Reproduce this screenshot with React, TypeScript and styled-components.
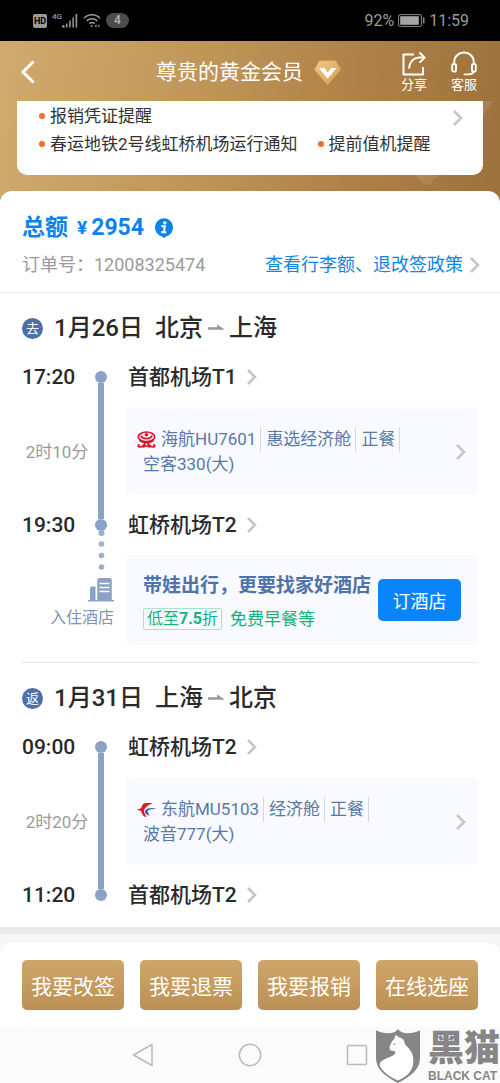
import React from "react";
import styled, { createGlobalStyle } from "styled-components";

const GlobalStyle = createGlobalStyle`
  *, *::before, *::after { box-sizing: border-box; }
  body {
    margin: 0;
    background: #fff;
    color: #2a2a2a;
    font-family: Roboto, "Noto Sans CJK SC", sans-serif;
  }
  h1, h2, h3, p, ul { margin: 0; padding: 0; }
  ul { list-style: none; }
  button { font: inherit; border: 0; padding: 0; background: none; cursor: pointer; }
  a { color: inherit; text-decoration: none; }
  svg { display: block; flex: none; }
`;

const Page = styled.div`
  position: relative;
  width: 100%;
  overflow: hidden;
`;

/* ---------- status bar ---------- */

const StatusBar = styled.div`
  display: flex;
  align-items: center;
  justify-content: space-between;
  height: 41px;
  padding: 0 31px 0 33px;
  background: #000;
  color: #9a9a9a;
  font-size: 16px;
  line-height: 20px;
`;

const StatusGroup = styled.div<{ $gap: number }>`
  display: flex;
  align-items: center;
  gap: ${(p) => p.$gap}px;
`;

const HdBadge = styled.span`
  width: 14px;
  border-radius: 2px;
  background: #9a9a9a;
  color: #000;
  font-size: 9px;
  font-weight: 700;
  line-height: 14px;
  text-align: center;
`;

const Signal = styled.span`
  display: flex;
  align-items: flex-start;
  font-size: 8px;
  font-weight: 500;
  line-height: 8px;
`;

const CountPill = styled.span`
  width: 23px;
  border-radius: 8px;
  background: #4c4c4c;
  color: #b5b5b5;
  font-size: 12px;
  font-weight: 500;
  line-height: 15px;
  text-align: center;
`;

/* ---------- gold header ---------- */

const Hero = styled.div`
  position: relative;
  padding-bottom: 28px;
  background: linear-gradient(97deg, #d0aa6e 0%, #c19759 38%, #ad8047 72%, #9d713c 100%);
`;

const HeroDecor = styled.svg`
  position: absolute;
  right: 0;
  bottom: 0;
`;

const Header = styled.header`
  display: flex;
  align-items: center;
  justify-content: space-between;
  height: 60px;
  padding: 2px 23px 0 20px;
  color: #fff;
`;

const BackButton = styled.button`
  flex: 1;
  color: inherit;
`;

const MemberTitle = styled.h1`
  display: flex;
  align-items: center;
  gap: 11px;
  font-size: 21px;
  font-weight: 400;
  line-height: 30px;
`;

const HeaderActions = styled.div`
  display: flex;
  flex: 1;
  justify-content: flex-end;
  gap: 24px;
`;

const HeaderAction = styled.button`
  display: flex;
  flex-direction: column;
  align-items: center;
  color: inherit;
  font-size: 13px;
  line-height: 18px;
`;

const NoticeCard = styled.section`
  position: relative;
  display: flex;
  align-items: flex-start;
  justify-content: space-between;
  margin: 0 17px;
  padding: 1px 20px 17px 22px;
  border-radius: 0 0 10px 10px;
  background: #fff;
`;

const NoticeList = styled.ul`
  display: flex;
  flex-wrap: wrap;
  column-gap: 20px;
`;

const Notice = styled.li<{ $fullRow?: boolean }>`
  display: flex;
  align-items: center;
  gap: 5px;
  width: ${(p) => (p.$fullRow ? "100%" : "auto")};
  color: #333;
  font-size: 17px;
  line-height: 28px;
  white-space: nowrap;

  &::before {
    content: "";
    width: 6px;
    height: 6px;
    border-radius: 50%;
    background: #fb6d21;
  }
`;

const NoticeMore = styled.button`
  height: 32px;
`;

/* ---------- order sheet ---------- */

const Sheet = styled.main`
  position: relative;
  margin-top: -12px;
  border-radius: 12px 12px 0 0;
  background: #fff;
`;

const Summary = styled.section`
  padding: 21px 20px 14px 22px;
  border-bottom: 1px solid #e6e6e6;
`;

const Total = styled.h2`
  display: flex;
  align-items: center;
  color: #0a83ee;
  font-size: 23px;
  font-weight: 700;
  line-height: 32px;
`;

const Currency = styled.span`
  margin: 0 4px 0 9px;
  font-size: 19px;
`;

const Amount = styled.span`
  margin-right: 10px;
`;

const OrderRow = styled.div`
  display: flex;
  align-items: center;
  justify-content: space-between;
  margin-top: 8px;
  color: #9b9b9b;
  font-size: 18px;
  line-height: 26px;
  white-space: nowrap;
`;

const PolicyLink = styled.a`
  display: flex;
  align-items: center;
  gap: 7px;
  color: #1285e2;
`;

const Trip = styled.section`
  padding: 0 22px;
`;

const TripBody = styled.div<{ $divided?: boolean }>`
  padding: 18px 0 17px;
  border-bottom: ${(p) => (p.$divided ? "1px solid #e6e6e6" : "0")};
`;

const TripTitle = styled.h2`
  display: flex;
  align-items: center;
  margin-bottom: 17px;
  font-size: 24px;
  font-weight: 500;
  line-height: 34px;
`;

const TripBadge = styled.span`
  width: 21px;
  margin-right: 11px;
  border-radius: 50%;
  background: #4c71a9;
  color: #fff;
  font-size: 13px;
  font-weight: 400;
  line-height: 21px;
  text-align: center;
`;

const TripRoute = styled.span`
  display: flex;
  align-items: center;
  gap: 5px;
  margin-left: 12px;
`;

const Timeline = styled.div`
  display: grid;
  grid-template-columns: 70px 34px 1fr;
  grid-template-rows: 30px auto 30px;
  row-gap: 15px;
`;

const Time = styled.time<{ $row: number }>`
  grid-area: ${(p) => p.$row} / 1;
  font-size: 21px;
  font-weight: 500;
  line-height: 30px;
`;

const Duration = styled.span`
  grid-area: 2 / 1;
  align-self: center;
  padding-top: 2px;
  color: #9b9b9b;
  font-size: 17px;
  line-height: 26px;
  text-align: center;
  white-space: nowrap;
`;

const Rail = styled.span`
  grid-area: 1 / 2 / 4 / 3;
  display: flex;
  flex-direction: column;
  align-items: center;
  width: 18px;
  padding: 9px 0;
`;

const RailStop = styled.span`
  width: 12px;
  height: 12px;
  border-radius: 50%;
  background: #8ba2c6;
`;

const RailLine = styled.span`
  flex: 1;
  width: 6px;
  background: #8ba2c6;
`;

const Station = styled.a<{ $row: number }>`
  grid-area: ${(p) => p.$row} / 3;
  display: flex;
  align-items: center;
  gap: 10px;
  padding-left: 2px;
  font-size: 21px;
  font-weight: 500;
  line-height: 30px;
`;

const FlightCard = styled.a`
  grid-area: 2 / 3;
  display: flex;
  align-items: center;
  justify-content: space-between;
  padding: 20px 12px 18px 11px;
  border-radius: 5px;
  background: #f8faff;
  color: #5878a6;
  font-size: 17px;
  line-height: 25px;
`;

const FlightFacts = styled.div`
  display: flex;
  align-items: center;
  white-space: nowrap;
`;

const Fact = styled.span`
  padding: 0 4px 0 5px;
  border-right: 1px solid #d3d9e4;
`;

const Aircraft = styled.p`
  padding-left: 6px;
`;

const HotelSide = styled.div`
  grid-area: 3 / 1 / 5 / 3;
  display: flex;
  flex-direction: column;
  align-items: flex-end;
  justify-content: flex-end;
  padding: 0 12px 14px 0;
  color: #7d93b8;
  font-size: 16px;
  line-height: 26px;
`;

const HotelCard = styled.div`
  grid-area: 4 / 3;
  display: flex;
  align-items: center;
  justify-content: space-between;
  padding: 15px 17px;
  border-radius: 5px;
  background: #f8faff;
`;

const HotelTitle = styled.h3`
  color: #4f72a8;
  font-size: 19px;
  font-weight: 700;
  line-height: 32px;
  white-space: nowrap;
`;

const HotelPerks = styled.p`
  display: flex;
  align-items: center;
  gap: 8px;
  margin-top: 6px;
  color: #12b37a;
  font-size: 17px;
  line-height: 22px;
`;

const DiscountTag = styled.span`
  padding: 0 3px;
  border: 1px solid #a9e3cc;
  border-radius: 2px;
  font-size: 16px;
  line-height: 20px;
  white-space: nowrap;
`;

const BookButton = styled.button`
  flex: none;
  width: 83px;
  height: 42px;
  border-radius: 5px;
  background: #0a84fb;
  color: #fff;
  font-size: 18px;
`;

/* ---------- bottom actions ---------- */

const ActionArea = styled.div`
  padding-top: 9px;
  border-top: 7px solid #ebebeb;
  background: #f6f6f6;
`;

const ActionBar = styled.footer`
  display: grid;
  grid-template-columns: repeat(4, 1fr);
  gap: 16px;
  padding: 17px 22px 16px;
  border-radius: 12px 12px 0 0;
  background: #fff;
`;

const GoldButton = styled.button`
  height: 50px;
  border-radius: 5px;
  background: linear-gradient(180deg, #cfa669 0%, #bb9055 100%);
  color: #fff;
  font-size: 21px;
  white-space: nowrap;
`;

const SystemNav = styled.nav`
  display: flex;
  align-items: center;
  justify-content: center;
  gap: 84px;
  height: 57px;
  background: #fbfbfb;
`;

const Watermark = styled.div`
  position: absolute;
  right: 0;
  bottom: 0;
  display: flex;
  align-items: center;
  gap: 7px;
  height: 55px;
  color: #868686;
`;

const WatermarkName = styled.div`
  width: 72px;
  font-size: 36px;
  font-weight: 900;
  line-height: 40px;
`;

const WatermarkLatin = styled.div`
  font-family: "Liberation Sans", sans-serif;
  font-size: 12px;
  font-weight: 700;
  line-height: 14px;
  white-space: nowrap;
`;

/* ---------- icons ---------- */

const Chevron = () => (
  <svg width="10" height="16" viewBox="0 0 10 16" fill="none" stroke="#c6c6c6" strokeWidth="2.6">
    <path d="M1 1l7 7-7 7" />
  </svg>
);

const RouteArrow = () => (
  <svg width="16" height="8" viewBox="0 0 16 8" fill="#999">
    <path d="M0 3.200h9V.6L16 5v.8H0z" />
  </svg>
);

const SignalIcon = () => (
  <svg width="16" height="15" viewBox="0 0 16 15" fill="#9a9a9a">
    <circle cx="1.4" cy="13.4" r="1.3" />
    <path d="M4 10.500h1.500V14.500H4zM7.200 7.500h1.500v7H7.200zM10.400 4.500h1.500v10h-1.500zM13.600 1h1.600v13.500h-1.600z" />
  </svg>
);

const WifiIcon = () => (
  <svg width="18" height="15" viewBox="0 0 18 15" fill="none" stroke="#9a9a9a" strokeWidth="1.5">
    <path d="M1 5.200C5.500.6 12.500.6 17 5.200M3.600 8c3-3 7.800-3 10.800 0M6.300 10.600c1.600-1.400 3.800-1.400 5.400 0" />
    <circle cx="8.600" cy="13" r="1" fill="#9a9a9a" stroke="none" />
    <path d="M11.500 13l2-1.500v3zM16.500 11.500v3l-2-1.500z" fill="#9a9a9a" stroke="none" />
  </svg>
);

const BatteryIcon = () => (
  <svg width="27" height="13" viewBox="0 0 27 13" fill="none">
    <rect x=".6" y=".6" width="22.800" height="11.800" rx="1.500" stroke="#8a8a8a" />
    <rect x="2.200" y="2.200" width="18.600" height="8.600" fill="#a5a5a5" />
    <path d="M25.700 3.500v6" stroke="#8a8a8a" strokeWidth="1.600" />
  </svg>
);

const BackIcon = () => (
  <svg width="16" height="24" viewBox="0 0 16 24" fill="none" stroke="#fff" strokeWidth="3">
    <path d="M13.500 1.500L3 12l10.500 10.500" />
  </svg>
);

const DiamondIcon = () => (
  <svg width="27" height="25" viewBox="0 0 27 25">
    <defs>
      <linearGradient id="gem" x1="0" y1="0" x2="1" y2="1">
        <stop offset="0" stopColor="#f0cb88" />
        <stop offset="1" stopColor="#d39d50" />
      </linearGradient>
    </defs>
    <path d="M5.500 1h16L26.500 9.500 13.500 24.500.5 9.500z" fill="url(#gem)" stroke="#e0b066" strokeLinejoin="round" />
    <path d="M5 8h5.500l3.200 4.800L17 8h5.500l-8.800 10.800z" fill="#fff" />
  </svg>
);

const ShareIcon = () => (
  <svg width="26" height="25" viewBox="0 0 26 25" fill="none" stroke="#fff" strokeWidth="2" strokeLinejoin="round">
    <path d="M13 3.500H2.500v20h19.500v-7.500" />
    <path d="M8 17.500c.5-6.500 4.500-10.700 10.500-10.900h5" />
    <path d="M18.500 1.500l5.200 5.100-5.200 5" />
  </svg>
);

const HeadsetIcon = () => (
  <svg width="26" height="25" viewBox="0 0 26 25" fill="none" stroke="#fff" strokeWidth="1.900" strokeLinecap="round">
    <path d="M3.200 13V11.200C3.200 5.500 7.500 1.500 13 1.500s9.800 4 9.800 9.700V13" />
    <rect x="1.200" y="13" width="3.800" height="7.500" rx="1.600" />
    <rect x="21" y="13" width="3.800" height="7.500" rx="1.600" />
    <path d="M22.800 20.500c-.9 1.900-2.600 2.700-5 2.900h-4.300" />
  </svg>
);

const InfoIcon = () => (
  <svg width="20" height="20" viewBox="0 0 20 20">
    <path d="M10 .3a9.200 9.200 0 0 1 2.500 18L10 20l-2.500-1.700A9.200 9.200 0 0 1 10 .3z" fill="#0a83ee" />
    <circle cx="10.800" cy="4.900" r="1.700" fill="#fff" />
    <path d="M7.300 8.200h3.600l-1 5.600M7 14.300h5.300" stroke="#fff" strokeWidth="1.900" fill="none" />
  </svg>
);

const RailDots = () => (
  <svg width="25" height="49" viewBox="0 0 25 49" fill="#9bafcf">
    <circle cx="12.500" cy="4" r="3" />
    <circle cx="12.500" cy="15" r="2.800" />
    <circle cx="12.500" cy="26.500" r="2.800" />
    <circle cx="12.500" cy="38" r="2.800" />
  </svg>
);

const HotelIcon = () => (
  <svg width="26" height="27" viewBox="0 0 26 27" fill="#8ba2c6">
    <path d="M2 22V10.500a2 2 0 0 1 2-2h3.500V22zM9.300 22V2a2 2 0 0 1 2-2h10.500a2 2 0 0 1 2 2v20z" />
    <path d="M0 22h26v1.500H0z" />
    <path d="M11.500 5.500h10M11.500 9.500h10M11.500 13.500h10" stroke="#fff" strokeWidth="1.400" />
  </svg>
);

const HainanLogo = () => (
  <svg width="19" height="18" viewBox="0 0 19 18" fill="none" stroke="#d9182d">
    <ellipse cx="9.500" cy="5.800" rx="8.200" ry="4.800" strokeWidth="1.700" />
    <path d="M4 4.500c1 4.200 10 4.200 11 0" strokeWidth="1.700" />
    <circle cx="9.500" cy="3.800" r="1.800" fill="#d9182d" stroke="none" />
    <path d="M2.500 9c3 3 11 3 14 0" strokeWidth="2" />
    <path d="M8.500 11.500C7.800 14 5 16.500 2 15.700c-1.200-.6-.6-2 .8-1.800M10.500 11.500c.7 2.500 3.500 5 6.500 4.200 1.200-.6.600-2-.8-1.800M6 16.500c1.500-2.200 5.500-2.200 7 0" strokeWidth="1.900" />
  </svg>
);

const EasternLogo = () => (
  <svg width="19" height="18" viewBox="0 0 19 18">
    <path d="M16 2H8.500C6 2 5 5 4 7.300L0 8.600l4 1.500C5 13.500 6.500 16 9.500 16L7.300 11.500c-.4-1.600-.4-3 .9-4.300L11 4.600z" fill="#dd1c2b" />
    <path d="M18.500 7c-4-.4-9 .2-10.200 2.500-.9 2 1 4.100 4.200 5.200-1.600-2-1.600-3.800.3-5 1.500-.9 4-1.900 5.700-2.300z" fill="#26439a" />
    <path d="M18.500 7.600c-3.500.2-7.500 1-8 2.600-.2.900.2 1.600.9 2.300.1-2 3-3.900 7.100-4.900z" fill="#f8faff" />
  </svg>
);

const CatShield = () => (
  <svg width="46" height="54" viewBox="0 0 46 54">
    <path d="M23 0c2 3 5.500 4.300 9.500 4.300 4.500 0 9-1.300 12.500-3v28C45 40 36 47.500 23 54 10 47.500 1 40 1 29.300v-28c3.500 1.700 8 3 12.500 3C17.500 4.300 21 3 23 0z" fill="#868686" />
    <path d="M20.300 6c1.700.4 2.800 1.600 3.800 2.600 3.800.6 5.400 3.200 5.900 7 6 5.400 8.700 10 8.300 17.400C38 42 32 47.500 23 51.500 14 47.500 6.500 42 4.800 36.500 4 32 9 30.500 16 27.500c4.500-2 5-3.500 3.500-5.500-2.300.1-4.300-.3-4.800-1.700-.3-1.500-.2-2.700.4-3.700.8-2.500 2-5 4.500-7.200z" fill="#fff" />
    <path d="M17.500 15.200l3.300-1.200-1.300 2z" fill="#868686" />
  </svg>
);

/* ---------- trips ---------- */

type TripData = {
  badge: string;
  date: string;
  from: string;
  to: string;
  depart: string;
  arrive: string;
  departAt: string;
  arriveAt: string;
  duration: string;
  logo: React.ReactNode;
  facts: string[];
  aircraft: string;
  hotel?: boolean;
};

const trips: TripData[] = [
  {
    badge: "去",
    date: "1月26日",
    from: "北京",
    to: "上海",
    depart: "17:20",
    arrive: "19:30",
    departAt: "首都机场T1",
    arriveAt: "虹桥机场T2",
    duration: "2时10分",
    logo: <HainanLogo />,
    facts: ["海航HU7601", "惠选经济舱", "正餐"],
    aircraft: "空客330(大)",
    hotel: true,
  },
  {
    badge: "返",
    date: "1月31日",
    from: "上海",
    to: "北京",
    depart: "09:00",
    arrive: "11:20",
    departAt: "虹桥机场T2",
    arriveAt: "首都机场T2",
    duration: "2时20分",
    logo: <EasternLogo />,
    facts: ["东航MU5103", "经济舱", "正餐"],
    aircraft: "波音777(大)",
  },
];

const TripSection = ({ trip }: { trip: TripData }) => (
  <Trip>
    <TripBody $divided={trip.hotel}>
      <TripTitle>
        <TripBadge>{trip.badge}</TripBadge>
        {trip.date}
        <TripRoute>
          {trip.from}
          <RouteArrow />
          {trip.to}
        </TripRoute>
      </TripTitle>
      <Timeline>
        <Time $row={1}>{trip.depart}</Time>
        <Duration>{trip.duration}</Duration>
        <Time $row={3}>{trip.arrive}</Time>
        <Rail>
          <RailStop />
          <RailLine />
          <RailStop />
        </Rail>
        <Station $row={1} href="#depart">
          {trip.departAt}
          <Chevron />
        </Station>
        <FlightCard href="#flight">
          <div>
            <FlightFacts>
              {trip.logo}
              {trip.facts.map((fact) => (
                <Fact key={fact}>{fact}</Fact>
              ))}
            </FlightFacts>
            <Aircraft>{trip.aircraft}</Aircraft>
          </div>
          <Chevron />
        </FlightCard>
        <Station $row={3} href="#arrive">
          {trip.arriveAt}
          <Chevron />
        </Station>
        {trip.hotel && (
          <>
            <HotelSide>
              <RailDots />
              <HotelIcon />
              入住酒店
            </HotelSide>
            <HotelCard>
              <div>
                <HotelTitle>带娃出行，更要找家好酒店</HotelTitle>
                <HotelPerks>
                  <DiscountTag>
                    低至<b>7.5</b>折
                  </DiscountTag>
                  免费早餐等
                </HotelPerks>
              </div>
              <BookButton>订酒店</BookButton>
            </HotelCard>
          </>
        )}
      </Timeline>
    </TripBody>
  </Trip>
);

export default function App() {
  return (
    <Page>
      <GlobalStyle />
      <StatusBar>
        <StatusGroup $gap={5}>
          <HdBadge>HD</HdBadge>
          <Signal>
            4G
            <SignalIcon />
          </Signal>
          <WifiIcon />
          <CountPill>4</CountPill>
        </StatusGroup>
        <StatusGroup $gap={4}>
          <span>92%</span>
          <BatteryIcon />
          <span>11:59</span>
        </StatusGroup>
      </StatusBar>

      <Hero>
        <HeroDecor width="90" height="102" viewBox="0 0 90 102" fill="#fff" fillOpacity=".1">
          <path d="M66 0h18L73 14z" />
          <path d="M5 74h24l-8 8q-4 3-8 0z" />
        </HeroDecor>
        <Header>
          <BackButton aria-label="返回">
            <BackIcon />
          </BackButton>
          <MemberTitle>
            尊贵的黄金会员
            <DiamondIcon />
          </MemberTitle>
          <HeaderActions>
            <HeaderAction>
              <ShareIcon />
              分享
            </HeaderAction>
            <HeaderAction>
              <HeadsetIcon />
              客服
            </HeaderAction>
          </HeaderActions>
        </Header>
        <NoticeCard>
          <NoticeList>
            <Notice $fullRow>报销凭证提醒</Notice>
            <Notice>春运地铁2号线虹桥机场运行通知</Notice>
            <Notice>提前值机提醒</Notice>
          </NoticeList>
          <NoticeMore aria-label="更多通知">
            <Chevron />
          </NoticeMore>
        </NoticeCard>
      </Hero>

      <Sheet>
        <Summary>
          <Total>
            总额
            <Currency>¥</Currency>
            <Amount>2954</Amount>
            <InfoIcon />
          </Total>
          <OrderRow>
            <span>订单号：12008325474</span>
            <PolicyLink href="#policy">
              查看行李额、退改签政策
              <Chevron />
            </PolicyLink>
          </OrderRow>
        </Summary>
        {trips.map((trip) => (
          <TripSection key={trip.badge} trip={trip} />
        ))}
      </Sheet>

      <ActionArea>
        <ActionBar>
          <GoldButton>我要改签</GoldButton>
          <GoldButton>我要退票</GoldButton>
          <GoldButton>我要报销</GoldButton>
          <GoldButton>在线选座</GoldButton>
        </ActionBar>
      </ActionArea>

      <SystemNav>
        <button aria-label="后退">
          <svg width="22" height="24" viewBox="0 0 22 24" fill="none" stroke="#b9b9b9" strokeWidth="1.500" strokeLinejoin="round">
            <path d="M20 1.500v21L1.500 12z" />
          </svg>
        </button>
        <button aria-label="主页">
          <svg width="24" height="24" viewBox="0 0 24 24" fill="none" stroke="#b9b9b9" strokeWidth="1.500">
            <circle cx="12" cy="12" r="10.700" />
          </svg>
        </button>
        <button aria-label="最近任务">
          <svg width="22" height="22" viewBox="0 0 22 22" fill="none" stroke="#b9b9b9" strokeWidth="1.500">
            <rect x="1.500" y="1.500" width="19" height="19" rx="1" />
          </svg>
        </button>
      </SystemNav>

      <Watermark>
        <CatShield />
        <div>
          <WatermarkName>黑猫</WatermarkName>
          <WatermarkLatin>BLACK CAT</WatermarkLatin>
        </div>
      </Watermark>
    </Page>
  );
}
